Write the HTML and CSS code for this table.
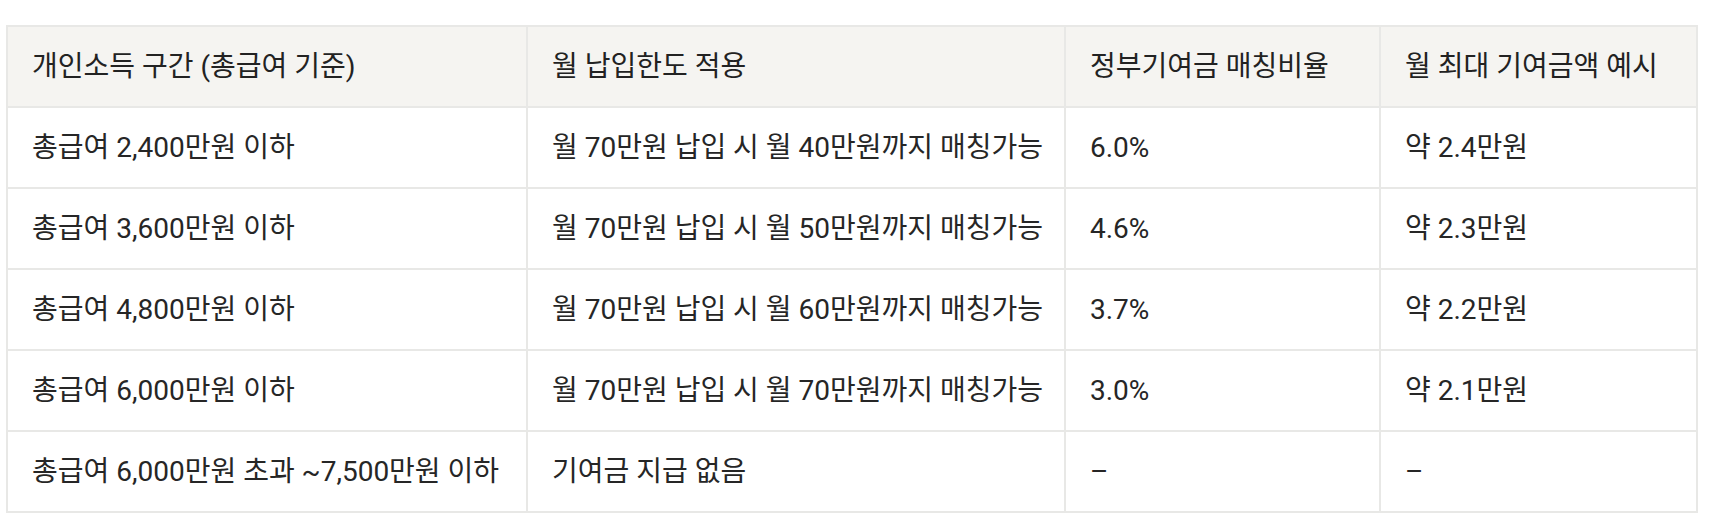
FILE: index.html
```html
<!DOCTYPE html>
<html lang="ko">
<head>
<meta charset="utf-8">
<title>청년도약계좌 정부기여금</title>
<link rel="stylesheet" href="styles.css">
</head>
<body>
<div class="wrap">
<table class="grid">
<colgroup>
<col class="c1"><col class="c2"><col class="c3"><col class="c4">
</colgroup>
<thead>
<tr><th>개인소득 구간 (총급여 기준)</th><th>월 납입한도 적용</th><th>정부기여금 매칭비율</th><th>월 최대 기여금액 예시</th></tr>
</thead>
<tbody>
<tr><td>총급여 2,400만원 이하</td><td>월 70만원 납입 시 월 40만원까지 매칭가능</td><td>6.0%</td><td>약 2.4만원</td></tr>
<tr><td>총급여 3,600만원 이하</td><td>월 70만원 납입 시 월 50만원까지 매칭가능</td><td>4.6%</td><td>약 2.3만원</td></tr>
<tr><td>총급여 4,800만원 이하</td><td>월 70만원 납입 시 월 60만원까지 매칭가능</td><td>3.7%</td><td>약 2.2만원</td></tr>
<tr><td>총급여 6,000만원 이하</td><td>월 70만원 납입 시 월 70만원까지 매칭가능</td><td>3.0%</td><td>약 2.1만원</td></tr>
<tr><td>총급여 6,000만원 초과 ~7,500만원 이하</td><td>기여금 지급 없음</td><td>–</td><td>–</td></tr>
</tbody>
</table>
</div>
</body>
</html>
```
FILE: styles.css
```css
html, body {
  margin: 0;
  background: #ffffff;
}
.wrap {
  padding: 25px 6px 0 6px;
}
.grid {
  border-collapse: collapse;
  table-layout: fixed;
  width: 1690px;
  font-family: "Roboto", "Noto Sans CJK KR", sans-serif;
  font-size: 28px;
  color: #262626;
}
.c1 { width: 520px; }
.c2 { width: 538px; }
.c3 { width: 315px; }
.c4 { width: 317px; }
.grid th, .grid td {
  border: 2px solid #e8e8e6;
  padding: 20px 24px;
  line-height: 39px;
  text-align: left;
  font-weight: 400;
  white-space: nowrap;
  vertical-align: middle;
}
.grid th {
  background: #f5f4f1;
  color: #222222;
}
```
